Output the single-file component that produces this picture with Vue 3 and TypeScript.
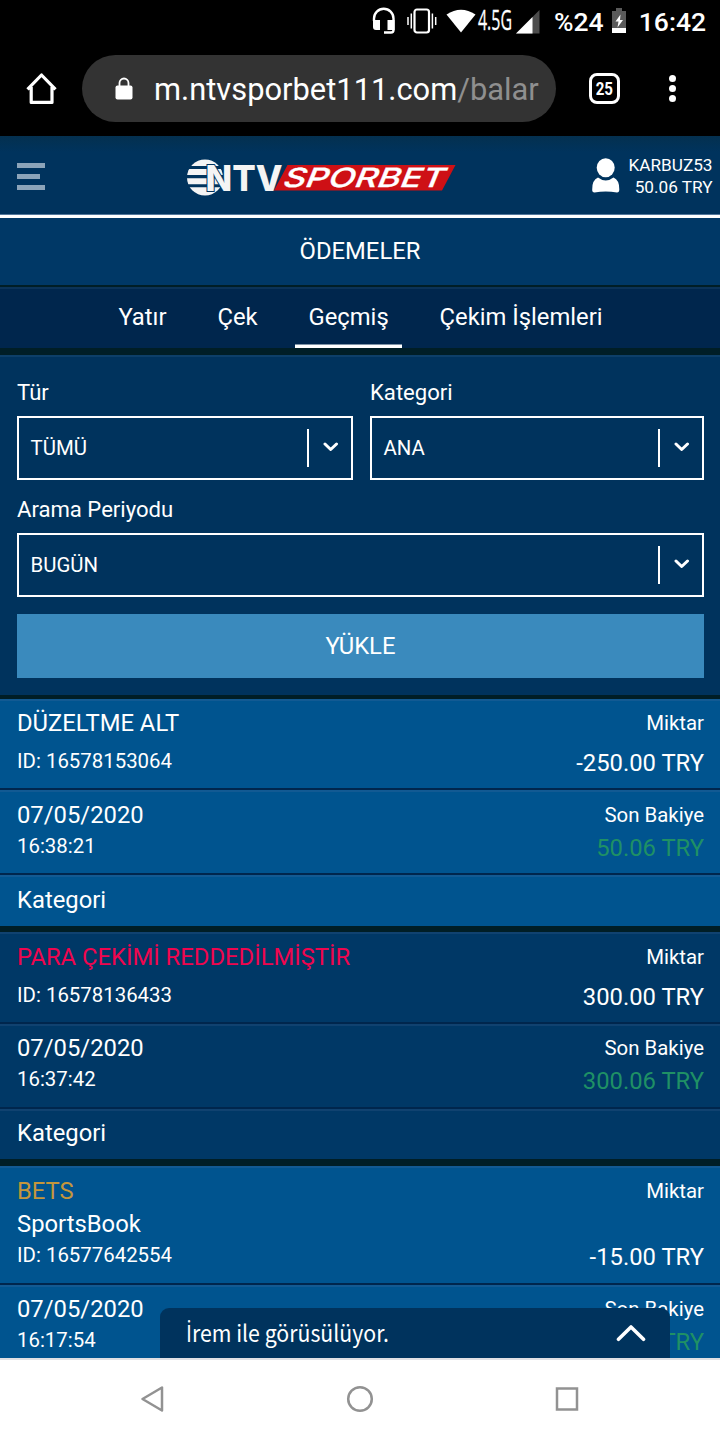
<script setup lang="ts">
interface Entry {
  title: string
  tone: string
  product?: string
  id: string
  amount: string
  date: string
  time: string
  balance: string
  footer?: string
  variant: string
}

const tabs: string[] = ['Yatır', 'Çek', 'Geçmiş', 'Çekim İşlemleri']
const activeTab = 'Geçmiş'

const filters = [
  { label: 'Tür', value: 'TÜMÜ', wide: false },
  { label: 'Kategori', value: 'ANA', wide: false },
  { label: 'Arama Periyodu', value: 'BUGÜN', wide: true },
]

const entries: Entry[] = [
  {
    title: 'DÜZELTME ALT', tone: 'plain', id: '16578153064', amount: '-250.00 TRY',
    date: '07/05/2020', time: '16:38:21', balance: '50.06 TRY', footer: 'Kategori', variant: 'first',
  },
  {
    title: 'PARA ÇEKİMİ REDDEDİLMİŞTİR', tone: 'rejected', id: '16578136433', amount: '300.00 TRY',
    date: '07/05/2020', time: '16:37:42', balance: '300.06 TRY', footer: 'Kategori', variant: 'dark',
  },
  {
    title: 'BETS', tone: 'bets', product: 'SportsBook', id: '16577642554', amount: '-15.00 TRY',
    date: '07/05/2020', time: '16:17:54', balance: '0.06 TRY', variant: 'tall',
  },
]
</script>

<template>
  <div class="screen">
    <div class="status">
      <svg class="i-head" width="24" height="28" viewBox="0 0 24 28">
        <path d="M2 14V11.500a9.600 9.600 0 0 1 19.500 0V23q0 2.500-2.500 2.500H12" fill="none" stroke="#fff" stroke-width="2.400" />
        <path d="M1 13h7v10H4q-3 0-3-3zM15.500 13h7v10h-7z" fill="#fff" />
      </svg>
      <svg class="i-vib" width="30" height="26" viewBox="0 0 30 26">
        <rect x="7.500" y="1.500" width="14.500" height="23" rx="2.500" fill="none" stroke="#fff" stroke-width="2.200" />
        <path d="M4.300 5.500v15M25.400 5.500v15M1 9v8M28.700 9v8" stroke="#fff" stroke-width="1.500" />
      </svg>
      <svg class="i-wifi" width="30" height="24" viewBox="0 0 30 24">
        <path d="M.5 5.500Q15-4 29.500 5.500L15 23.500z" fill="#fff" />
      </svg>
      <span class="net"><span class="net-in">4.5G</span></span>
      <svg class="i-sig" width="24" height="24" viewBox="0 0 24 24">
        <path d="M23.500 0v23.500H0z" fill="#4d4d4d" />
        <path d="M16.500 7v16.500H0z" fill="#fff" />
      </svg>
      <span class="pct">%24</span>
      <svg class="i-bat" width="14" height="25" viewBox="0 0 14 25">
        <path d="M4 0h6v3h4v22H0V3h4z" fill="#5a5a5a" />
        <path d="M0 20h14v5H0z" fill="#fff" />
        <path d="M8.500 6.500 3.500 13.500h3l-1 6 5.500-7.500H8z" fill="#fff" />
      </svg>
      <span class="clock">16:42</span>
    </div>

    <div class="browser">
      <svg class="home" width="32" height="32" viewBox="0 0 32 32">
        <path d="M1.500 16.300 15.500 2l14 14.300M5.200 14v15.400h20.800V14" fill="none" stroke="#fff" stroke-width="3.200" stroke-linejoin="round" />
      </svg>
      <div class="pill">
        <svg class="lock" width="18" height="23" viewBox="0 0 18 23">
          <path d="M4.500 10V6a4.500 4.500 0 0 1 9 0v4" fill="none" stroke="#fff" stroke-width="1.800" />
          <rect x=".5" y="8.500" width="17" height="14" rx="2" fill="#fff" />
        </svg>
        <span class="url">m.ntvsporbet111.com<span class="path">/balar</span></span>
      </div>
      <div class="count"><span>25</span></div>
      <div class="dots"><i></i><i></i><i></i></div>
    </div>

    <header class="header">
      <div class="burger"><i></i><i class="short"></i><i></i></div>
      <svg class="logo" width="272" height="40" viewBox="0 0 272 40">
        <clipPath id="globe"><circle cx="21" cy="20.500" r="18" /></clipPath>
        <g clip-path="url(#globe)" fill="#f4f4f4">
          <path d="M0 2h42v7H10Q14 9 0 9z" />
          <path d="M0 12h42v6H0zM0 21.300h42v6H0zM0 30.300h42V40H0z" />
        </g>
        <text class="ntv" x="21.500" y="33.500" textLength="77" lengthAdjust="spacingAndGlyphs">NTV</text>
        <path d="M103.500 8H271.500L258 33.500H90z" fill="#ce1015" />
        <text class="sporbet" transform="translate(97 30) skewX(-22)" textLength="161" lengthAdjust="spacingAndGlyphs">SPORBET</text>
      </svg>
      <div class="account">
        <svg width="28" height="36" viewBox="0 0 28 36">
          <ellipse cx="13.700" cy="9.700" rx="9" ry="9.500" fill="#fff" />
          <path d="M6 19.500Q13.700 25.500 21.500 19.500 27.500 22 27.300 31.500 27.300 34.500 25 34.500 13.700 32.500 2.500 34.500 0 34.500 .2 31.500 0 22 6 19.500z" fill="#fff" />
        </svg>
        <div class="who"><span>KARBUZ53</span><span>50.06 TRY</span></div>
      </div>
    </header>

    <h1 class="title">ÖDEMELER</h1>

    <nav class="tabs">
      <a v-for="tab in tabs" :key="tab" class="tab" :class="{ active: tab === activeTab }">{{ tab }}</a>
    </nav>

    <section class="filters">
      <label v-for="f in filters" :key="f.label" class="field" :class="{ wide: f.wide }">
        <span class="label">{{ f.label }}</span>
        <span class="select">
          <span class="value">{{ f.value }}</span>
          <i class="bar"></i>
          <svg width="16" height="10" viewBox="0 0 16 10">
            <path d="M2 2 7.700 7.500 13.500 2" fill="none" stroke="#fff" stroke-width="3" stroke-linecap="round" stroke-linejoin="round" />
          </svg>
        </span>
      </label>
      <button class="load">YÜKLE</button>
    </section>

    <main class="list">
      <article v-for="e in entries" :key="e.id" class="card" :class="e.variant">
        <div class="row r1">
          <div class="left">
            <span class="big" :class="e.tone">{{ e.title }}</span>
            <span v-if="e.product" class="big product">{{ e.product }}</span>
            <span class="small id">ID: {{ e.id }}</span>
          </div>
          <div class="right">
            <span class="small">Miktar</span>
            <span class="big amount">{{ e.amount }}</span>
          </div>
        </div>
        <div class="row r2">
          <div class="left">
            <span class="big">{{ e.date }}</span>
            <span class="small time">{{ e.time }}</span>
          </div>
          <div class="right">
            <span class="small">Son Bakiye</span>
            <span class="big balance">{{ e.balance }}</span>
          </div>
        </div>
        <div v-if="e.footer" class="row r3"><span class="big">{{ e.footer }}</span></div>
      </article>
    </main>

    <div class="chat">
      <span class="agent"><span class="dotted">İ</span>rem ile görüsülüyor.</span>
      <svg width="30" height="18" viewBox="0 0 30 18">
        <path d="M2.500 15.300 15 3 27.500 15.300" fill="none" stroke="#fff" stroke-width="3.600" stroke-linecap="round" stroke-linejoin="round" />
      </svg>
    </div>

    <footer class="system">
      <svg width="24" height="28" viewBox="0 0 24 28"><path d="M22 2.500v23L2.500 14z" fill="none" stroke="#929292" stroke-width="2.500" stroke-linejoin="round" /></svg>
      <svg width="28" height="28" viewBox="0 0 28 28"><circle cx="14" cy="14" r="11.800" fill="none" stroke="#929292" stroke-width="2.500" /></svg>
      <svg width="24" height="26" viewBox="0 0 24 26"><rect x="2" y="2.500" width="20" height="21" fill="none" stroke="#929292" stroke-width="2.500" /></svg>
    </footer>
  </div>
</template>

<style>
body { margin: 0; background: #000; overflow: hidden; }
</style>

<style scoped>
.screen {
  position: relative;
  width: 720px;
  height: 1440px;
  overflow: hidden;
  display: flex;
  flex-direction: column;
  background: #001e26;
  color: #fff;
  font-family: Roboto, "Liberation Sans", sans-serif;
}
.screen > * { flex: none; box-sizing: border-box; }
svg { display: block; flex: none; }

.status {
  height: 45px;
  background: #000;
  display: flex;
  align-items: flex-start;
  padding: 0 14px 0 372px;
  font-size: 26.500px;
  font-weight: 500;
  line-height: 44px;
}
.i-head { margin-top: 7px; }
.i-vib { margin: 8px 0 0 11px; }
.i-wifi { margin: 9px 0 0 9px; }
.net { width: 34px; margin-left: 2px; font: 500 27px/39px "Open Sans", "Noto Sans", sans-serif; }
.net-in { display: inline-block; transform-origin: 0 50%; transform: scaleX(.59); -webkit-text-stroke: .3px #fff; }
.i-sig { margin: 10px 0 0 4px; }
.pct { width: 50px; margin-left: 14px; }
.i-bat { margin: 8px 0 0 8px; }
.clock { margin-left: auto; white-space: nowrap; }

.browser {
  height: 91px;
  background: #000;
  display: flex;
  align-items: center;
  padding: 0 44px 4px 26px;
}
.pill {
  width: 474px;
  height: 67px;
  margin-left: 24px;
  border-radius: 34px;
  background: #333;
  display: flex;
  align-items: center;
  padding-left: 33px;
  box-sizing: border-box;
}
.url { margin-left: 21px; padding-top: 3px; font-size: 30.850px; line-height: 40px; white-space: nowrap; }
.path { color: #8f8f8f; }
.count {
  width: 31px;
  height: 31px;
  margin-left: 33px;
  box-sizing: border-box;
  border: 3px solid #fff;
  border-radius: 8px;
  text-align: center;
  font-size: 18px;
  font-weight: 700;
  line-height: 25px;
}
.count span { display: inline-block; transform: scaleX(.84); }
.dots { margin-left: 49px; display: flex; flex-direction: column; gap: 3px; }
.dots i { width: 7px; height: 7px; border-radius: 50%; background: #fff; }

.header {
  height: 82px;
  background: linear-gradient(#04304f, #00335d 16px, #00335d);
  border-bottom: 3px solid #fff;
  box-shadow: inset 0 -1px #52779b;
  display: flex;
  align-items: flex-start;
  padding: 0 7.500px 0 17px;
}
.burger { width: 27.500px; margin-top: 27px; display: flex; flex-direction: column; gap: 6px; }
.burger i { height: 5px; background: #8ca4b9; }
.burger .short { width: 23px; }
.logo { margin: 21px 0 0 139.500px; }
.ntv {
  font: 800 35px Inter, sans-serif;
  fill: #f4f4f4;
  stroke: #00335d;
  stroke-width: 2px;
  paint-order: stroke;
}
.sporbet { font: 500 26.500px Inter, sans-serif; fill: #fff; stroke: #fff; stroke-width: .3px; }
.account { margin-left: auto; display: flex; align-items: flex-start; padding-top: 22px; }
.who {
  width: 93px;
  margin-top: -4px;
  display: flex;
  flex-direction: column;
  align-items: flex-end;
  font-size: 17.200px;
  line-height: 22px;
}

.title {
  height: 67px;
  margin: 0 0 2px;
  background: #003866;
  font-size: 23.800px;
  font-weight: 400;
  line-height: 66px;
  text-align: center;
}

.tabs {
  height: 61px;
  margin-bottom: 7px;
  background: #00264d;
  border-top: 2px solid #0b3358;
  display: flex;
  justify-content: center;
  gap: 23.700px;
  padding-left: 1px;
  font-size: 23.800px;
  line-height: 56px;
}
.tab { height: 59px; box-sizing: border-box; padding: 0 13.600px; white-space: nowrap; }
.active { border-bottom: 3px solid #fff; box-shadow: inset 0 -1px #7f93a6; }

.filters {
  height: 340px;
  margin-bottom: 4px;
  background: #00335d;
  border-top: 2px solid #0d3f68;
  padding: 21px 16px 0 17px;
  display: grid;
  grid-template-columns: 336px 334px;
  grid-auto-rows: max-content;
  column-gap: 17px;
}
.field { display: block; height: 117px; }
.wide, .load { grid-column: 1 / 3; }
.label { display: block; height: 38px; font-size: 22.100px; line-height: 29px; }
.select {
  height: 64px;
  box-sizing: border-box;
  border: 2px solid #fff;
  display: flex;
  align-items: center;
  padding: 0 12px 0 11.500px;
  font-size: 20.400px;
}
.bar { width: 2px; height: 38px; margin: 0 14px 0 auto; background: #fff; }
.select svg { margin-bottom: 3px; }
.load {
  height: 64px;
  margin: 2px 0 0;
  padding: 0;
  border: 0;
  background: #3a8abd;
  color: #fff;
  font: 400 23.800px/64px Roboto, sans-serif;
}

.list { height: 659px; overflow: hidden; }
.card { margin-bottom: 6px; --bg: #00548f; --hi: #125a93; --line: #00264d; }
.card.dark { margin-bottom: 7px; --bg: #003866; --hi: #104270; --line: #00264d; }
.row {
  box-sizing: border-box;
  background: var(--bg);
  border-top: 2px solid var(--hi);
  border-bottom: 2px solid var(--line);
  padding: 8px 16px 0 17px;
  display: flex;
  justify-content: space-between;
}
.r1 { height: 91px; }
.r2 { height: 85px; padding-top: 9px; }
.r3 { height: 51px; padding-top: 9px; border-bottom: 0; }
.dark .r1 { height: 92px; padding-top: 9px; }
.dark .r2, .tall .r2, .dark .r3 { padding-top: 8px; }
.dark .r3 { height: 50px; }
.tall .r1 { height: 119px; padding-top: 9px; }
.left, .right { display: flex; flex-direction: column; white-space: nowrap; }
.right { align-items: flex-end; }
.big { font-size: 23.800px; line-height: 28px; }
.small { font-size: 20.400px; line-height: 28px; }
.id { margin-top: 10px; }
.tall .product { margin-top: 5px; }
.tall .id { margin-top: 3px; }
.amount { margin-top: 12px; }
.tall .amount { margin-top: 38px; }
.time { margin-top: 3px; }
.balance { margin-top: 5px; color: #1f9065; }
.rejected { color: #f0054e; }
.bets { color: #c4963c; }

.chat {
  position: absolute;
  left: 160px;
  top: 1308px;
  width: 510px;
  height: 50px;
  border-radius: 9px 9px 0 0;
  background: #00335d;
  display: flex;
  align-items: center;
  justify-content: space-between;
  padding: 0 24px 0 26px;
  font: 400 23px/48px "Noto Sans CJK SC", "Noto Sans", sans-serif;
}
.agent { height: 50px; transform-origin: 0 50%; transform: scaleX(.925); white-space: nowrap; }
.dotted { font-family: "Open Sans", sans-serif; }

.system {
  height: 82px;
  background: #fff;
  border-top: 2px solid #e0e0e4;
  display: flex;
  align-items: center;
  justify-content: space-between;
  padding: 0 141px 2px 140px;
}
</style>
